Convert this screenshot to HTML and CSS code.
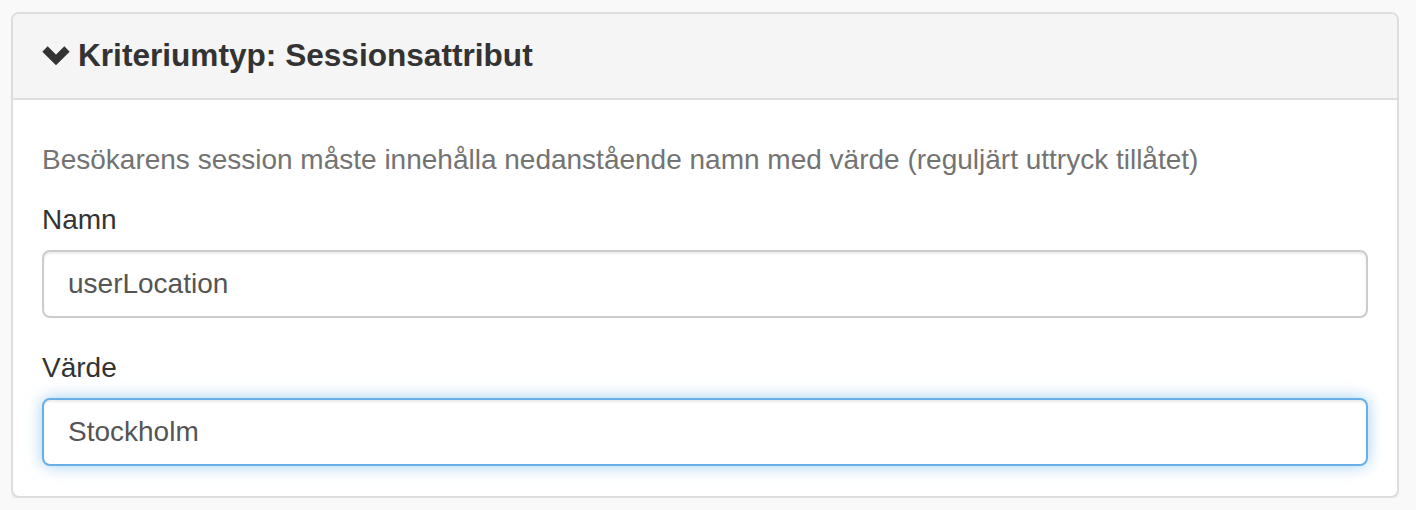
FILE: index.html
```html
<!DOCTYPE html>
<html lang="sv">
<head>
<meta charset="utf-8">
<title>Kriteriumtyp: Sessionsattribut</title>
<link rel="stylesheet" href="styles.css">
</head>
<body>
<div class="panel">
  <div class="panel-heading">
    <h3 class="panel-title">
      <svg class="chevron" width="30" height="21" viewBox="0 0 30 21" aria-hidden="true">
        <polyline points="4,4 15,15 26,4" fill="none" stroke="#333" stroke-width="7.5" stroke-linejoin="miter"/>
      </svg>
      <span>Kriteriumtyp: Sessionsattribut</span>
    </h3>
  </div>
  <div class="panel-body">
    <p class="help-block">Besökarens session måste innehålla nedanstående namn med värde (reguljärt uttryck tillåtet)</p>
    <div class="form-group">
      <label class="form-label" for="namn">Namn</label>
      <input class="form-control" id="namn" type="text" value="userLocation">
    </div>
    <div class="form-group">
      <label class="form-label" for="varde">Värde</label>
      <input class="form-control is-focused" id="varde" type="text" value="Stockholm">
    </div>
  </div>
</div>
</body>
</html>
```

FILE: styles.css
```css
* { box-sizing: border-box; }

html, body {
  background: #f9f9f9;
}

body {
  margin: 12px 17px 0 11px;
  font-family: "Liberation Sans", Arial, Helvetica, sans-serif;
  font-size: 28px;
  line-height: 40px;
  color: #333;
}

.panel {
  background: #fff;
  border: 2px solid #dddddd;
  border-radius: 8px;
  box-shadow: 0 2px 2px rgba(0, 0, 0, 0.05);
  overflow: hidden;
}

.panel-heading {
  background: #f5f5f5;
  border-bottom: 2px solid #dddddd;
  padding: 21px 29px 23px 28px;
}

.panel-title {
  margin: 0;
  display: flex;
  align-items: center;
  gap: 7px;
  font-size: 31.6px;
  line-height: 40px;
  font-weight: 700;
  color: #333;
}

.chevron {
  flex: none;
  display: block;
  margin-top: 1px;
}

.panel-body {
  padding: 30px 29px 30px;
}

.help-block {
  margin: 10px 0 20px;
  color: #737373;
}

.form-group {
  margin-bottom: 30px;
}

.form-group:last-child {
  margin-bottom: 0;
}

.form-label {
  display: block;
  margin-bottom: 10px;
  font-weight: 400;
  color: #333;
}

.form-control {
  display: block;
  width: 100%;
  height: 68px;
  padding: 12px 24px;
  font-family: inherit;
  font-size: 28px;
  line-height: 40px;
  color: #555;
  background: #fff;
  border: 2px solid #cccccc;
  border-radius: 8px;
  box-shadow: inset 0 2px 2px rgba(0, 0, 0, 0.075);
  outline: none;
}

.form-control.is-focused {
  border-color: #66afe9;
  box-shadow: inset 0 2px 2px rgba(0, 0, 0, 0.075), 0 0 16px rgba(102, 175, 233, 0.6);
}
```
